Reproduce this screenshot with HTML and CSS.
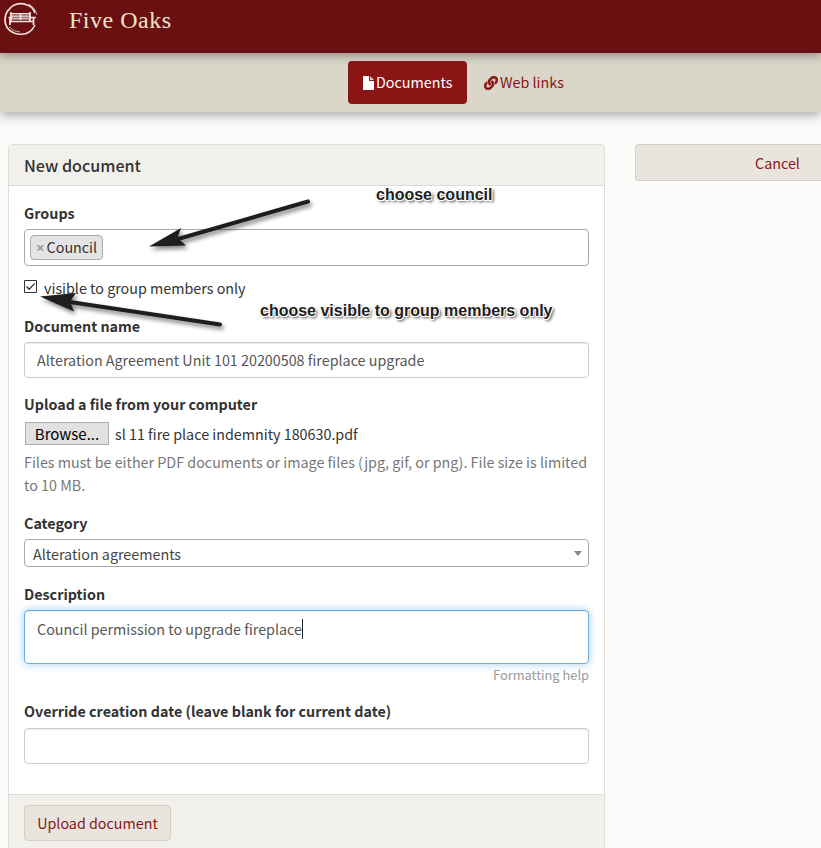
FILE: index.html
```
<!DOCTYPE html>
<html lang="en">
<head>
<meta charset="utf-8">
<title>Five Oaks</title>
<link rel="stylesheet" href="styles.css">
</head>
<body>
<header class="banner">
  <svg class="logo" width="36" height="36" viewBox="0 0 36 36" fill="none" stroke="#eee4df">
    <path d="M5 10C9 3 17 1 24 4C28 5 31 9 32 12M32 24C28 32 21 34 15 33C7 32 2 26 2 19C2 15 3 12 5 9" stroke-width="1.6"/>
    <path d="M3 12C0 19 3 28 10 31M25 3C30 5 33 9 34 14M6 26Q11 31 17 31" stroke-width=".7"/>
    <path d="M7 12H28V18.500H7Z" fill="#eee4df" fill-opacity=".45" stroke="none"/>
    <path d="M7 12.500H28M7 15.200H28M7 17.800H28" stroke-width="1"/>
    <path d="M8 11V20M17.500 12V19M27 11V20" stroke-width="1.6"/>
    <path d="M5.500 16.500H9M6 20.500H31M26.500 16.500H33M7 16V24M30.500 16V24" stroke-width="1.7"/>
  </svg>
  <h1 class="site-name">Five Oaks</h1>
</header>
<nav class="nav">
  <a class="tab tab-active"><svg width="11" height="14" viewBox="0 0 11 14"><path fill="#fff" d="M0 .7Q0 0 .7 0H6V4.300Q6 5 6.700 5H11V13.300Q11 14 10.300 14H.7Q0 14 0 13.300Z"/><path fill="#e8c9b9" d="M7 0L11 4H7Z"/></svg><span>Documents</span></a>
  <a class="tab"><svg width="14" height="14" viewBox="0 0 512 512" fill="#8b1515" stroke="#8b1515" stroke-width="18"><path d="M326.612 185.391c59.747 59.809 58.927 155.698.36 214.590-.110.120-.240.250-.360.370l-67.200 67.200c-59.270 59.270-155.699 59.262-214.960 0-59.270-59.260-59.270-155.700 0-214.960l37.106-37.106c9.840-9.840 26.786-3.300 27.294 10.606.648 17.722 3.826 35.527 9.690 52.721 1.986 5.822.567 12.262-3.783 16.612l-13.087 13.087c-28.026 28.026-28.905 73.660-1.155 101.960 28.024 28.579 74.086 28.749 102.325.510l67.200-67.190c28.191-28.191 28.073-73.757 0-101.830-3.701-3.694-7.429-6.564-10.341-8.569a16.037 16.037 0 0 1-6.947-12.606c-.396-10.567 3.348-21.456 11.698-29.806l21.054-21.055c5.521-5.521 14.182-6.199 20.584-1.731a152.482 152.482 0 0 1 20.522 17.197zM467.547 44.449c-59.261-59.262-155.690-59.270-214.960 0l-67.200 67.200c-.120.120-.250.250-.360.370-58.566 58.892-59.387 154.781.360 214.590a152.454 152.454 0 0 0 20.521 17.196c6.402 4.468 15.064 3.789 20.584-1.731l21.054-21.055c8.350-8.350 12.094-19.239 11.698-29.806a16.037 16.037 0 0 0-6.947-12.606c-2.912-2.005-6.640-4.875-10.341-8.569-28.073-28.073-28.191-73.639 0-101.830l67.200-67.190c28.239-28.239 74.300-28.069 102.325.510 27.750 28.300 26.872 73.934-1.155 101.960l-13.087 13.087c-4.350 4.350-5.769 10.790-3.783 16.612 5.864 17.194 9.042 34.999 9.690 52.721.509 13.906 17.454 20.446 27.294 10.606l37.106-37.106c59.271-59.259 59.271-155.699.001-214.959z"/></svg><span>Web links</span></a>
</nav>
<main class="page">
  <section class="panel">
    <h2 class="panel-title">New document</h2>
    <div class="panel-body">
      <div class="label">Groups</div>
      <div class="multi"><span class="chip"><b class="remove">×</b><span>Council</span></span></div>
      <div class="visibility">
        <svg width="13" height="13" viewBox="0 0 13 13" fill="#fff" stroke="#333"><path d="M.5.5H12.500V12.500H.5Z"/><path d="M2.500 6.500L5.200 9.200L10.700 3.400" fill="none" stroke-width="1.3"/></svg>
        <span>visible to group members only</span>
      </div>
      <div class="label">Document name</div>
      <div class="field name-field"><span class="name-text">Alteration Agreement Unit 101 20200508 fireplace upgrade</span></div>
      <div class="label">Upload a file from your computer</div>
      <div class="file"><span class="browse">Browse...</span><span>sl 11 fire place indemnity 180630.pdf</span></div>
      <div class="help">Files must be either PDF documents or image files (jpg, gif, or png). File size is limited<br>to 10 MB.</div>
      <div class="label">Category</div>
      <div class="select"><span class="select-text">Alteration agreements</span><i class="caret"></i></div>
      <div class="label">Description</div>
      <div class="area"><span>Council permission to upgrade fireplace</span><i class="cursor"></i></div>
      <div class="format">Formatting help</div>
      <div class="label">Override creation date (leave blank for current date)</div>
      <div class="field date-field"></div>
    </div>
    <div class="panel-footer"><span class="btn upload">Upload document</span></div>
  </section>
  <aside class="side"><span class="btn cancel">Cancel</span></aside>
</main>
<svg class="arrows" width="330" height="150" viewBox="0 190 330 150">
  <g fill="#1e1e1e" stroke="#1e1e1e" stroke-linecap="round">
    <path d="M308 201.500L178 239" stroke-width="4"/>
    <path d="M149 246.500L181 228L177.500 238L186 245.500Z" stroke="none"/>
    <path d="M220 324.500L70 302" stroke-width="4"/>
    <path d="M40 296.500L76 293L70 301.500L74 311.500Z" stroke="none"/>
  </g>
</svg>
<div class="note note-council">choose council</div>
<div class="note note-visible">choose visible to group members only</div>
</body>
</html>
```
FILE: styles.css
```
* { box-sizing: border-box; }
body {
  margin: 0;
  height: 848px;
  overflow: hidden;
  position: relative;
  background: #fbfbf9;
  color: #333;
  font: 14.32px/22px "Noto Sans CJK SC", "Noto Sans", sans-serif;
}
h1, h2 { margin: 0; }
span { white-space: nowrap; }
.banner {
  position: relative;
  z-index: 2;
  display: flex;
  height: 53px;
  padding-left: 3px;
  background: #6b1010;
  box-shadow: 0 2px 10px rgba(0, 0, 0, .4);
}
.logo { margin-top: 1px; }
.site-name {
  margin: 5px 0 0 30px;
  color: #efe3cf;
  font: 400 24px/30px "Liberation Serif", serif;
  letter-spacing: .5px;
}
.nav {
  position: relative;
  z-index: 1;
  display: flex;
  height: 59px;
  padding: 8px 0 0 348px;
  background: #dad7ca;
  box-shadow: 0 2px 12px rgba(0, 0, 0, .4);
}
.tab {
  display: flex;
  align-items: center;
  gap: 2px;
  height: 43px;
  padding: 0 15px 0 17px;
  border-radius: 4px;
  color: #8b1515;
}
.tab span { margin-top: -2px; }
.tab-active { width: 119px; padding: 0 0 0 15px; background: #8b1515; color: #fff; }
.page { display: flex; gap: 30px; padding: 32px 0 0 8px; }
.panel {
  width: 597px;
  height: 720px;
  flex: none;
  border: 1px solid #ddd;
  border-radius: 4px;
  background: #fff;
}
.panel-title {
  height: 41px;
  padding-left: 15px;
  border-bottom: 1px solid #ddd;
  border-radius: 3px 3px 0 0;
  background: #f2f0eb;
  font-size: 16.1px;
  font-weight: 500;
  line-height: 41px;
}
.panel-body { height: 608px; padding: 16px 15px 0; }
.label { height: 22px; font-weight: 700; }
.multi {
  height: 37px;
  margin: 5px 0 11px;
  padding: 5px;
  border: 1px solid #aaa;
  border-radius: 4px;
}
.chip {
  display: flex;
  width: 73px;
  height: 25px;
  gap: 2px;
  padding-left: 5px;
  border: 1px solid #aaa;
  border-radius: 4px;
  background: #e4e4e4;
}
.remove { color: #999; font: 700 15px/22px "Open Sans", sans-serif; }
.visibility { display: flex; gap: 7px; height: 22px; margin-bottom: 16px; }
.visibility svg { margin-top: 3px; }
.field {
  height: 36px;
  margin-top: 5px;
  padding: 0 12px;
  border: 1px solid #ccc;
  border-radius: 4px;
  box-shadow: inset 0 1px 1px rgba(0, 0, 0, .075);
  color: #555;
  line-height: 34px;
}
.name-field { margin-bottom: 15px; }
.date-field { margin-top: 6px; }
.file { display: flex; gap: 6px; height: 23px; margin: 7px 0 5px 1px; line-height: 23px; }
.browse {
  width: 84px;
  border: 1px solid #adadad;
  background: #e1e1e1;
  color: #000;
  font-size: 15px;
  line-height: 21px;
  text-align: center;
}
.help { height: 46px; margin-bottom: 16px; color: #777; line-height: 23px; white-space: nowrap; }
.select {
  display: flex;
  align-items: center;
  justify-content: space-between;
  height: 28px;
  margin: 5px 0 16px;
  padding: 0 6px 0 8px;
  border: 1px solid #aaa;
  border-radius: 4px;
  color: #444;
}
.select-text { padding-top: 2px; }
.caret { border: 4px solid transparent; border-top: 5px solid #888; border-bottom: 0; }
.area {
  display: flex;
  height: 54px;
  margin-top: 5px;
  padding: 7px 12px;
  border: 1px solid #66afe9;
  border-radius: 4px;
  box-shadow: inset 0 1px 1px rgba(0, 0, 0, .075), 0 0 8px rgba(102, 175, 233, .6);
  color: #555;
}
.cursor { width: 1px; height: 20px; margin-top: 1px; background: #222; }
.format { height: 22px; margin: 0 0 14px; color: #999; font-size: 12.85px; text-align: right; }
.panel-footer { height: 69px; padding: 10px 15px; border-top: 1px solid #ddd; background: #f2f0eb; }
.btn {
  display: block;
  border: 1px solid #d6cfbe;
  border-radius: 4px;
  background: #e9e5de;
  color: #8b1515;
  line-height: 34px;
  text-align: center;
}
.upload { width: 147px; height: 36px; }
.side { flex: 1; }
.cancel {
  height: 37px;
  padding-left: 119px;
  border-right: 0;
  border-radius: 4px 0 0 4px;
  line-height: 35px;
  text-align: left;
}
.arrows { position: absolute; left: 0; top: 190px; z-index: 3; filter: drop-shadow(2px 3px 2px rgba(0, 0, 0, .5)); }
.note {
  position: absolute;
  z-index: 4;
  color: #1e1e1e;
  font: 700 16px/18px "Liberation Sans", sans-serif;
  white-space: nowrap;
  text-shadow: -1px -1px 0 #fff, 1px -1px 0 #fff, -1px 1px 0 #fff, 1px 1px 0 #fff, 0 0 2px #555, 2px 2px 3px #333;
}
.note-council { left: 376px; top: 186px; }
.note-visible { left: 260px; top: 302px; }
```
